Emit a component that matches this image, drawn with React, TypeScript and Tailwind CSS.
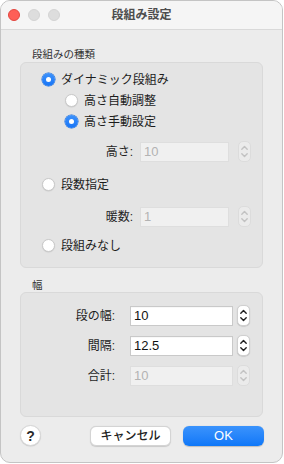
import React from "react";

// 段組み設定 dialog (macOS style sheet)

const Radio = ({ checked }: { checked?: boolean }) =>
  checked ? (
    <span className="flex h-[13px] w-[13px] shrink-0 items-center justify-center rounded-full bg-gradient-to-b from-[#3d92fb] to-[#1574f6] shadow-[0_0_0_0.5px_#1669d9]">
      <span className="h-[5px] w-[5px] rounded-full bg-white" />
    </span>
  ) : (
    <span className="h-[13px] w-[13px] shrink-0 rounded-full border border-[#c9c9c9] bg-white shadow-[0_0.5px_1px_rgba(0,0,0,0.12)]" />
  );

const Stepper = ({ disabled }: { disabled?: boolean }) => (
  <div
    className={
      disabled
        ? "h-[21px] w-[13px] shrink-0 rounded-[5px] border border-[#dcdcdc] bg-[#ebebeb]"
        : "h-[21px] w-[13px] shrink-0 rounded-[5px] border border-[#d0d0d0] bg-white shadow-[0_0.5px_1px_rgba(0,0,0,0.2)]"
    }
  >
    <svg viewBox="0 0 11 19" className="h-full w-full" fill="none">
      <polyline
        points="2.8,7.2 5.5,4.5 8.2,7.2"
        stroke={disabled ? "#c2c2c2" : "#1f1f1f"}
        strokeWidth="1.4"
        strokeLinecap="round"
        strokeLinejoin="round"
      />
      <polyline
        points="2.8,11.8 5.5,14.5 8.2,11.8"
        stroke={disabled ? "#c2c2c2" : "#1f1f1f"}
        strokeWidth="1.4"
        strokeLinecap="round"
        strokeLinejoin="round"
      />
    </svg>
  </div>
);

const RadioRow = ({ label, checked, indent }: { label: string; checked?: boolean; indent?: boolean }) => (
  <div className={`flex h-[21px] items-center gap-[6px] leading-none ${indent ? "pl-[44px]" : "pl-[21px]"}`}>
    <Radio checked={checked} />
    <span className="text-[12px] text-[#1c1c1c]">{label}</span>
  </div>
);

const FieldRow = ({
  label,
  value,
  disabled,
  labelW,
  inputW,
  gap,
  stepGap,
  className,
}: {
  label: string;
  value: string;
  disabled?: boolean;
  labelW: string;
  inputW: string;
  gap: string;
  stepGap: string;
  className?: string;
}) => (
  <div className={`flex h-[21px] items-center leading-none ${className ?? ""}`}>
    <div className={`${labelW} shrink-0 text-right text-[12px] text-[#1f1f1f]`}>{label}</div>
    <div
      className={`${gap} ${inputW} flex h-[20px] shrink-0 items-center px-[3px] text-[13px] ${
        disabled
          ? "border border-[#dedede] bg-[#f0f0f0] text-[#b3b3b3]"
          : "border border-[#c9c9c9] bg-white text-[#111] shadow-[inset_0_0.5px_0_rgba(0,0,0,0.06)]"
      }`}
    >
      {value}
    </div>
    <div className={stepGap}>
      <Stepper disabled={disabled} />
    </div>
  </div>
);

export default function App() {
  return (
    <div className="h-[464px] w-[284px] bg-white font-['Liberation_Sans','Noto_Sans_CJK_JP',sans-serif]">
      <div className="flex h-[463px] w-[283px] flex-col overflow-hidden rounded-[10px] border border-[#c4c4c4] bg-[#ececec]">
        {/* title bar */}
        <div className="relative flex h-[29px] shrink-0 items-center border-b border-[#d9d9d9] bg-[#f5f5f5]">
          <div className="flex items-center gap-[8px] pl-[7px]">
            <span className="h-[12px] w-[12px] rounded-full border border-[#e2463f] bg-[#fe5f57]" />
            <span className="h-[12px] w-[12px] rounded-full border border-[#d3d3d3] bg-[#dddddd]" />
            <span className="h-[12px] w-[12px] rounded-full border border-[#d3d3d3] bg-[#dddddd]" />
          </div>
          <div className="absolute inset-0 flex items-center justify-center text-[12px] font-bold text-[#4d4d4d]">
            段組み設定
          </div>
        </div>

        {/* 段組みの種類 */}
        <div className="mt-[18px] h-[12px] pl-[31px] text-[10.5px] leading-[12px] text-[#333]">段組みの種類</div>
        <div className="mx-[19px] mt-[2px] h-[206px] rounded-[6px] border border-[#d9d9d9] bg-[#e4e4e4] pt-[6px]">
          <RadioRow label="ダイナミック段組み" checked />
          <RadioRow label="高さ自動調整" indent />
          <RadioRow label="高さ手動設定" checked indent />
          <FieldRow
            label="高さ:"
            value="10"
            disabled
            labelW="w-[112px]"
            inputW="w-[89px]"
            gap="ml-[7px]"
            stepGap="ml-[9px]"
            className="mt-[9px]"
          />
          <div className="mt-[12px]">
            <RadioRow label="段数指定" />
          </div>
          <FieldRow
            label="暖数:"
            value="1"
            disabled
            labelW="w-[112px]"
            inputW="w-[89px]"
            gap="ml-[7px]"
            stepGap="ml-[9px]"
            className="mt-[11px]"
          />
          <div className="mt-[8px]">
            <RadioRow label="段組みなし" />
          </div>
        </div>

        {/* 幅 */}
        <div className="mt-[11px] h-[12px] pl-[31px] text-[10.5px] leading-[12px] text-[#333]">幅</div>
        <div className="mx-[19px] mt-[1px] h-[125px] rounded-[6px] border border-[#d9d9d9] bg-[#e4e4e4] pt-[12px]">
          <FieldRow
            label="段の幅:"
            value="10"
            labelW="w-[94px]"
            inputW="w-[103px]"
            gap="ml-[15px]"
            stepGap="ml-[4px]"
          />
          <FieldRow
            label="間隔:"
            value="12.5"
            labelW="w-[94px]"
            inputW="w-[103px]"
            gap="ml-[15px]"
            stepGap="ml-[4px]"
            className="mt-[9px]"
          />
          <FieldRow
            label="合計:"
            value="10"
            disabled
            labelW="w-[94px]"
            inputW="w-[103px]"
            gap="ml-[15px]"
            stepGap="ml-[4px]"
            className="mt-[9px]"
          />
        </div>

        {/* buttons */}
        <div className="mt-[8px] flex items-center pl-[19px] pr-[18px]">
          <div className="flex h-[21px] w-[21px] items-center justify-center rounded-full border border-[#d6d6d6] bg-white text-[14px] font-bold leading-none text-[#2a2a2a] shadow-[0_0.5px_1px_rgba(0,0,0,0.15)]">
            ?
          </div>
          <div className="ml-auto flex h-[20px] w-[81px] items-center justify-center rounded-[6px] border border-[#d4d4d4] bg-white text-[12px] font-medium leading-none text-[#222] shadow-[0_0.5px_1px_rgba(0,0,0,0.15)]">
            キャンセル
          </div>
          <div className="ml-[12px] flex h-[20px] w-[81px] items-center justify-center rounded-[6px] bg-gradient-to-b from-[#3a93fc] to-[#0c77f8] text-[13px] font-medium leading-none text-white shadow-[0_0.5px_1px_rgba(0,0,0,0.2)]">
            OK
          </div>
        </div>
      </div>
    </div>
  );
}
